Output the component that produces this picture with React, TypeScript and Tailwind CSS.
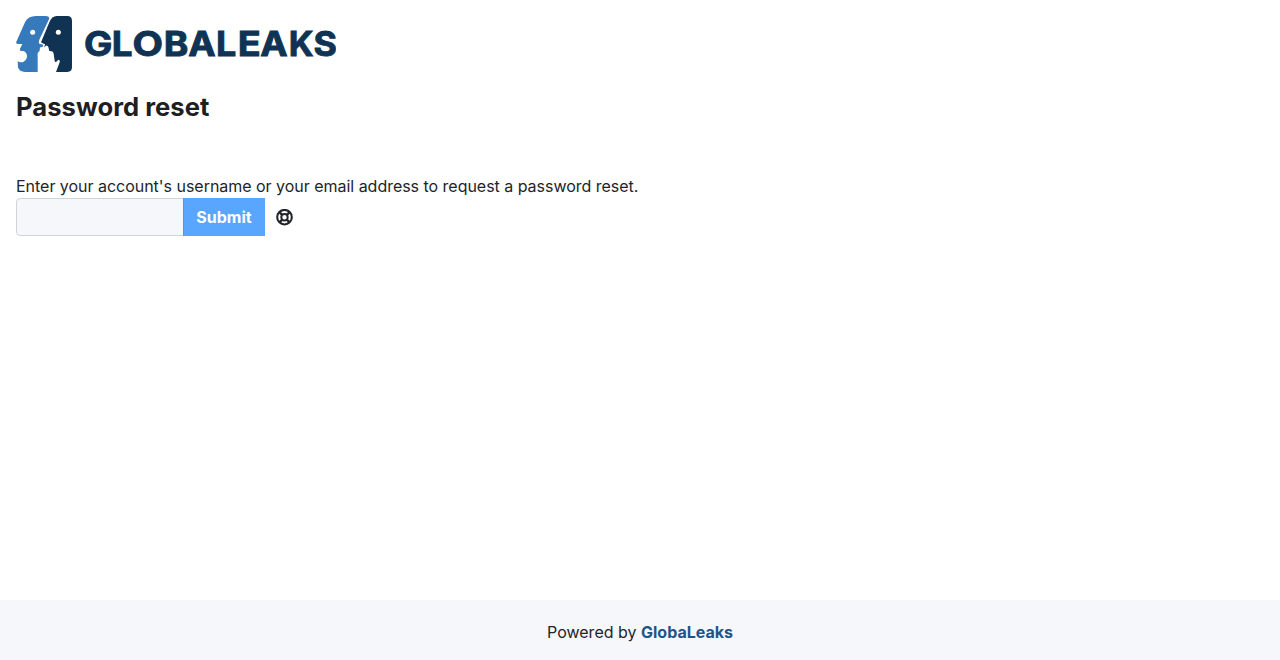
const letters: [string, number, number][] = [
  ["G", 68, 28.4],
  ["L", 95.8, 20.8],
  ["O", 116.6, 30.5],
  ["B", 147.8, 24.6],
  ["A", 172.2, 27.4],
  ["L", 200, 20.3],
  ["E", 221.8, 23],
  ["A", 244.2, 27.4],
  ["K", 272.7, 24.8],
  ["S", 297.4, 23.4],
];

function Logo() {
  return (
    <svg
      className="block h-14 w-80"
      viewBox="0 0 320 56"
      role="img"
      aria-label="GlobaLeaks"
    >
      <g transform="translate(-8 -8) scale(.33333)">
        <path
          fill="#377abc"
          d="M84 24H112Q126 24 123 34L96 91Q90 102 94 107L106 110Q105 116 103 117L97 118Q95 120 95 129L91 132Q88 136 89 142V192H51Q34 192 30 178L29 160Q37 165 47 161Q57 155 57 145Q57 133 46 129H37L36 122L43 108H29Q23 107 25 101L51 43Q60 24 84 24Z"
        />
        <path
          fill="#103253"
          d="M146 24H178Q192 24 192 38V178Q192 192 178 192H144L155 163Q157 155 151 155L145 161Q142 164 140 159L137 137Q136 130 130 130L124 129L121 117Q119 111 113 113L110 118L109 118L111 109L102 105Q98 104 101 98L124 43Q132 24 146 24Z"
        />
        <circle cx="74" cy="73" r="7.5" fill="white" />
        <circle cx="151" cy="73" r="7.5" fill="white" />
      </g>
      <g
        fill="#103253"
        stroke="#103253"
        strokeWidth="0.9"
        className="font-['Inter',sans-serif] text-[34px] font-bold"
      >
        {letters.map(([letter, x, width]) => (
          <text key={x} x={x} y="40" textLength={width} lengthAdjust="spacingAndGlyphs">
            {letter}
          </text>
        ))}
      </g>
    </svg>
  );
}

function LifeRing() {
  return (
    <svg
      className="ml-[11px] size-[17px]"
      viewBox="0 0 17 17"
      fill="none"
      stroke="currentColor"
      strokeWidth="2.1"
    >
      <circle cx="8.5" cy="8.2" r="7.3" />
      <circle cx="8.5" cy="8.2" r="3.2" strokeWidth="2" />
      <path
        strokeWidth="2.4"
        d="M3.4 3.1 6.4 6.1M13.6 3.1 10.6 6.1M3.4 13.3 6.4 10.3M13.6 13.3 10.6 10.3"
      />
    </svg>
  );
}

export default function App() {
  return (
    <div className="flex min-h-screen flex-col bg-white font-['Inter',sans-serif] text-base text-[#212529]">
      <header className="px-4 pt-4">
        <Logo />
        <h1 className="mt-4 text-[25.6px] leading-[38px] font-bold tracking-[0.04px] text-[#1d1f24]">
          Password reset
        </h1>
      </header>
      <main className="flex-1 px-4 pt-12">
        <label htmlFor="username" className="block leading-6 tracking-[-0.025px]">
          Enter your account's username or your email address to request a password reset.
        </label>
        <div className="flex h-[38px] items-center">
          <input
            id="username"
            className="h-[38px] w-[168px] rounded-l border border-[#ced4da] bg-[#f5f7fb] px-3 outline-none"
          />
          <button className="-ml-px h-[38px] w-[82px] border border-[#58a6ff] border-l-[#4a98ee] bg-[#58a6ff] font-bold text-white">
            Submit
          </button>
          <LifeRing />
        </div>
      </main>
      <footer className="flex h-[60px] items-center justify-center bg-[#f5f7fb] pt-1">
        <p>
          Powered by <a className="font-bold text-[#1f5489]">GlobaLeaks</a>
        </p>
      </footer>
    </div>
  );
}
